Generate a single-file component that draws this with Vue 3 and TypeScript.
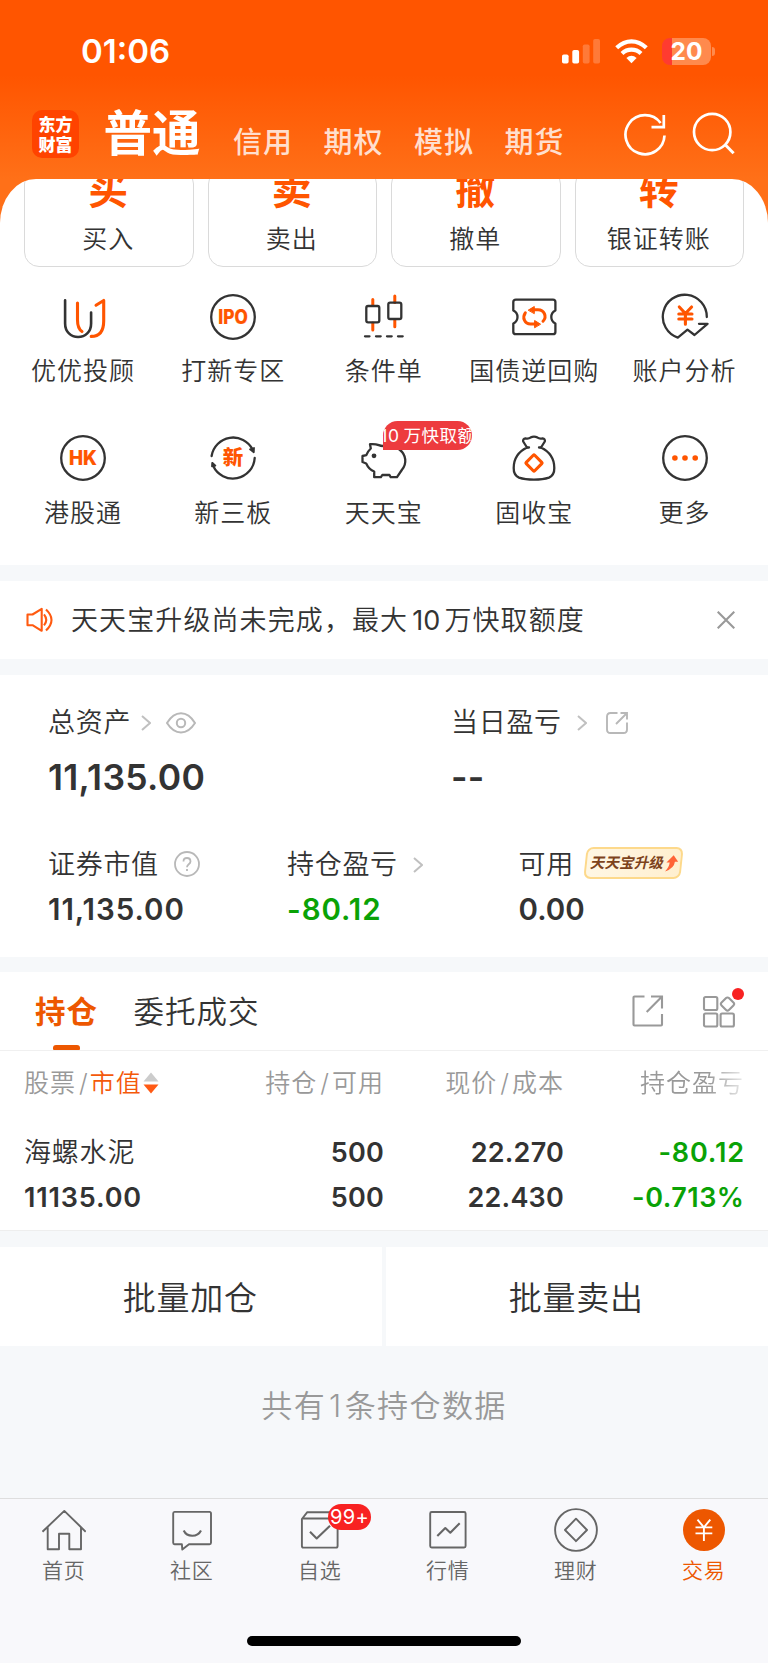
<script setup lang="ts">
type Cell = { icon: string; label: string; badge?: string }

const headerTabs: string[] = ['信用', '期权', '模拟', '期货']

const quickActions: { mark: string; label: string }[] = [
  { mark: '买', label: '买入' },
  { mark: '卖', label: '卖出' },
  { mark: '撤', label: '撤单' },
  { mark: '转', label: '银证转账' },
]

const services: Cell[] = [
  { icon: 'advisor', label: '优优投顾' },
  { icon: 'ipo', label: '打新专区' },
  { icon: 'candle', label: '条件单' },
  { icon: 'repo', label: '国债逆回购' },
  { icon: 'analysis', label: '账户分析' },
  { icon: 'hk', label: '港股通' },
  { icon: 'neeq', label: '新三板' },
  { icon: 'pig', label: '天天宝', badge: '10 万快取额' },
  { icon: 'bag', label: '固收宝' },
  { icon: 'more', label: '更多' },
]

const navItems: Cell[] = [
  { icon: 'home', label: '首页' },
  { icon: 'community', label: '社区' },
  { icon: 'watch', label: '自选', badge: '99+' },
  { icon: 'market', label: '行情' },
  { icon: 'wealth', label: '理财' },
  { icon: 'trade', label: '交易' },
]
</script>

<template>
  <div class="page">
    <header class="header">
      <div class="status">
        <span class="time">01:06</span>
        <div class="status-icons">
          <svg class="signal" viewBox="0 0 38 25">
            <rect x="0" y="15.5" width="6.6" height="9" rx="1.8" fill="#fff" />
            <rect x="10.3" y="11" width="6.8" height="13.5" rx="1.8" fill="#fff" />
            <rect x="20.8" y="5.5" width="6.8" height="19" rx="1.8" fill="#fff" opacity=".22" />
            <rect x="31.2" y="0" width="6.8" height="24.5" rx="1.8" fill="#fff" opacity=".22" />
          </svg>
          <svg class="wifi" viewBox="0 0 33 25" fill="none" stroke="#fff" stroke-width="4.2">
            <path d="M1.7 8.8Q8.5 2.3 16.5 2.3T31.3 8.8" />
            <path d="M7 14.5Q11 10.7 16.5 10.7T26 14.5" />
            <path d="M11.4 18.9Q16.5 14.6 21.6 18.9L16.5 24.2Z" fill="#fff" stroke="none" />
          </svg>
          <div class="battery"><span>20</span></div>
        </div>
      </div>
      <div class="topbar">
        <div class="logo"><span>东方</span><span>财富</span></div>
        <h1>普通</h1>
        <nav class="head-tabs">
          <span v-for="t in headerTabs" :key="t">{{ t }}</span>
        </nav>
        <svg class="refresh" viewBox="0 0 44 44" fill="none" stroke="#fff" stroke-width="2.7">
          <path d="M41.5 23.5A19.5 19.5 0 1 1 37.6 11" />
          <path d="M40.8 3V15.2H28.5" />
        </svg>
        <svg class="search" viewBox="0 0 44 44" fill="none" stroke="#fff" stroke-width="2.7">
          <circle cx="20.2" cy="20" r="18.2" />
          <path d="M33 32.5L41.6 41.2" stroke-width="3" />
        </svg>
      </div>
    </header>

    <section class="panel">
      <div class="actions">
        <div v-for="a in quickActions" :key="a.mark" class="action">
          <b>{{ a.mark }}</b>
          <span>{{ a.label }}</span>
        </div>
      </div>
      <div class="services">
        <div v-for="s in services" :key="s.icon" class="service">
          <div class="service-icon">
            <svg viewBox="0 0 48 48" fill="none" stroke="#333" stroke-width="2.3" stroke-linecap="round" stroke-linejoin="round">
              <template v-if="s.icon === 'advisor'">
                <path d="M6.1 7.2V30.5C6.1 39 12 44 19.1 44S32.1 39 32.1 30.5V19.5" stroke-width="2.6" />
                <path d="M18.5 10V27C18.5 33 20 36.5 23 38.5" stroke="#ff5500" stroke-width="3.1" />
                <path d="M37 12.3L44.7 7.5V28C44.7 38 41 43.4 32.2 43.4" stroke="#ff5500" stroke-width="3.1" />
              </template>
              <template v-else-if="s.icon === 'ipo'">
                <circle cx="24" cy="24" r="21.8" />
                <text x="24" y="31" class="mark" text-anchor="middle" textLength="29.5" lengthAdjust="spacingAndGlyphs">IPO</text>
              </template>
              <template v-else-if="s.icon === 'candle'">
                <path d="M12.8 6.5V12.5M12.8 30V37M34.8 3V9.5M34.8 26.5V33.7" stroke="#ff5500" stroke-width="3" />
                <rect x="6.3" y="13" width="13" height="16.3" rx="1.8" />
                <rect x="28.3" y="9.7" width="13" height="16.3" rx="1.8" />
                <path d="M5 43.3H9.5M16 43.3H20.7M27 43.3H31.7M38 43.3H42.7" />
              </template>
              <template v-else-if="s.icon === 'repo'">
                <path d="M6 6.6H43Q45.4 6.6 45.4 9V17.5Q41.3 19.5 41.3 24T45.4 30.5V39Q45.4 41.2 43 41.2H6Q3.3 41.2 3.3 39V30.5Q7.5 28.5 7.5 24T3.3 17.5V9Q3.3 6.6 6 6.6Z" />
                <path d="M15.3 19.8C12 24.5 14.5 31 20.5 31H26M33 28.2C37.5 23.5 34 16.8 28 16.8H22" stroke="#ff5500" stroke-width="3" />
                <path d="M18.5 17L24.3 13.5V20.3ZM30.3 31L24.6 27.5V34.4Z" fill="#ff5500" stroke="#ff5500" stroke-width="1" />
              </template>
              <template v-else-if="s.icon === 'analysis'">
                <path d="M45.8 24A22 22 0 1 0 16.8 44.6L26.5 36.7L33.5 42L46.5 30.8H38" />
                <path d="M18.3 14L24.4 20.5L30.6 14M17.8 21H31M17.8 26H31M24.4 21V31.2" stroke="#ff5500" stroke-width="3.1" />
              </template>
              <template v-else-if="s.icon === 'hk'">
                <circle cx="24" cy="24" r="21.8" />
                <text x="24" y="31" class="mark" text-anchor="middle" textLength="28" lengthAdjust="spacingAndGlyphs">HK</text>
              </template>
              <template v-else-if="s.icon === 'neeq'">
                <path d="M2.6 22A21.8 21.8 0 0 1 43.6 15.5M45.7 24A21.8 21.8 0 0 1 4.2 32" />
                <path d="M41 15.3L44.8 18.2L45 14ZM3 32.3L3.2 28.8L6.4 31.6Z" fill="#333" stroke-width="1.8" />
                <text x="24" y="31.2" class="mark cjk" text-anchor="middle">新</text>
              </template>
              <template v-else-if="s.icon === 'pig'">
                <path d="M22.5 12C18.5 12 18 9.3 10 10.2L10.8 14.5C8 17 7 19.4 6.3 21.2L2.5 22V28L6.2 29.5C8 33.5 10.8 36.3 14.2 37.5V43.2H20.9L22.3 41H29.5L30.7 43.2H37L41.8 36C47.2 29.5 46.3 21 39.5 15.5C33 10 26 10.5 22.5 12Z" />
                <circle cx="14" cy="21.8" r="2.4" fill="#333" stroke="none" />
              </template>
              <template v-else-if="s.icon === 'bag'">
                <path d="M17 13.5L13.2 7.5Q12.6 4.8 15.5 4.3Q18.5 5 20.5 3.6Q24 1.5 27.5 3.6Q29.5 5 32.5 4.3Q35.4 4.8 34.8 7.5L31 13.5Q44.3 20 44.3 34Q44.5 41 39 43.6Q33 45.6 24 45.6T9 43.6Q3.5 41 3.7 34Q3.7 20 17 13.5Z" />
                <path d="M17 13.5H19M29 13.5H31" />
                <rect x="18" y="23" width="12" height="12" rx="1" transform="rotate(45 24 29)" stroke="#ff5500" stroke-width="3.1" />
              </template>
              <template v-else>
                <circle cx="24" cy="24" r="21.8" />
                <g fill="#ff5500" stroke="none">
                  <circle cx="13.9" cy="24" r="2.8" /><circle cx="24" cy="24" r="2.8" /><circle cx="34.2" cy="24" r="2.8" />
                </g>
              </template>
            </svg>
            <em v-if="s.badge"><i>{{ s.badge }}</i></em>
          </div>
          <span>{{ s.label }}</span>
        </div>
      </div>
    </section>

    <section class="notice">
      <svg class="speaker" viewBox="0 0 28 26" fill="none" stroke="#ff5a10" stroke-width="2.1" stroke-linejoin="round">
        <path d="M1.5 7.5H6.5L15.7 1.8V23.8L6.5 18.2H1.5Z" />
        <path d="M18 7.3Q22.5 12.8 18 18.3M20 2.5Q31 12.8 20 23.5" />
      </svg>
      <p>天天宝升级尚未完成，最大<span class="num">10</span>万快取额度</p>
      <svg class="close" viewBox="0 0 18 18" stroke="#999" stroke-width="2.1"><path d="M.7.7L17.3 17.3M17.3.7L.7 17.3" /></svg>
    </section>

    <section class="assets">
      <div class="asset-row main-row">
        <div class="asset">
          <div class="asset-label">总资产
            <svg class="chev" viewBox="0 0 10 16"><path d="M1 1L9 8L1 15" /></svg>
            <svg class="eye" viewBox="0 0 30 22" fill="none" stroke="#b8b8b8" stroke-width="2"><path d="M1 11Q7 1.3 15 1.3T29 11Q23 20.5 15 20.5T1 11Z" /><circle cx="15" cy="11" r="4.2" /></svg>
          </div>
          <strong class="big">11,135.00</strong>
        </div>
        <div class="asset">
          <div class="asset-label">当日盈亏
            <svg class="chev chev-wide" viewBox="0 0 10 16"><path d="M1 1L9 8L1 15" /></svg>
            <svg class="share" viewBox="0 0 22 22" fill="none" stroke="#b8b8b8" stroke-width="1.9"><path d="M11.5 1H4.5Q1 1 1 4.5V17.5Q1 21 4.5 21H17.5Q21 21 21 17.5V10.5M14.5 1H21V7.5M21 1L10 12" /></svg>
          </div>
          <strong class="big dashes">--</strong>
        </div>
      </div>
      <div class="asset-row sub-row">
        <div class="asset">
          <div class="asset-label">证券市值
            <svg class="help" viewBox="0 0 26 26" fill="none" stroke="#b8b8b8" stroke-width="1.8"><circle cx="13" cy="13" r="12" /><path d="M9.5 10.5Q9.5 7 13 7T16.5 10.5Q16.5 12 14.5 13.5Q13 14.8 13 16.3M13 18V20" /></svg>
          </div>
          <strong class="wide">11,135.00</strong>
        </div>
        <div class="asset">
          <div class="asset-label">持仓盈亏
            <svg class="chev chev-wide" viewBox="0 0 10 16"><path d="M1 1L9 8L1 15" /></svg>
          </div>
          <strong class="wide green">-80.12</strong>
        </div>
        <div class="asset">
          <div class="asset-label">可用
            <span class="upgrade"><b>天天宝升级</b>
              <svg viewBox="0 0 14 18"><path d="M8.5 0L14 7L10.5 7Q10.5 14 1 17.5Q5 13 5 8H1.5Z" fill="#ff6337" /></svg>
            </span>
          </div>
          <strong>0.00</strong>
        </div>
      </div>
    </section>

    <section class="holdings">
      <div class="hold-tabs">
        <span class="tab active">持仓</span>
        <span class="tab">委托成交</span>
        <svg class="export" viewBox="0 0 32 32" fill="none" stroke="#999" stroke-width="2.1"><path d="M12.5 1.5H2.5Q1.5 1.5 1.5 2.5V29.5Q1.5 30.5 2.5 30.5H29Q30 30.5 30 29.5V19M19 1.5H30V13.5M30 1.5L14.7 17" /></svg>
        <div class="layout-icon">
          <svg viewBox="0 0 34 34" fill="none" stroke="#999" stroke-width="2.1"><rect x="2" y="2" width="13.3" height="13" rx="1.5" /><rect x="2" y="18.5" width="13.3" height="13" rx="1.5" /><rect x="18.6" y="18.5" width="13.3" height="13" rx="1.5" /><rect x="20.3" y="3.8" width="10.4" height="10.4" rx="2" transform="rotate(45 25.5 9)" /></svg>
          <i class="dot"></i>
        </div>
      </div>
      <div class="grid-row head">
        <span class="sort">股票<s>/</s><b>市值</b><svg viewBox="0 0 16 22"><path d="M8 .5L15.5 9.5H.5Z" fill="#ccc" /><path d="M8 21.5L15.5 12.5H.5Z" fill="#ff5a14" /></svg></span>
        <span>持仓<s>/</s>可用</span>
        <span>现价<s>/</s>成本</span>
        <span class="fade">持仓盈亏</span>
      </div>
      <div class="grid-row line-one">
        <span class="stock">海螺水泥</span><span>500</span><span>22.270</span><span class="green wide">-80.12</span>
      </div>
      <div class="grid-row line-two">
        <span class="wide">11135.00</span><span>500</span><span>22.430</span><span class="green percent">-0.713%</span>
      </div>
    </section>

    <section class="batch">
      <button>批量加仓</button>
      <button>批量卖出</button>
    </section>

    <p class="summary">共有<span class="num">1</span>条持仓数据</p>

    <footer class="navbar">
      <div class="nav-list">
        <div v-for="n in navItems" :key="n.icon" class="nav" :class="{ current: n.icon === 'trade' }">
          <div class="nav-icon">
            <svg viewBox="0 0 44 44" fill="none" stroke="#666" stroke-width="1.9" stroke-linejoin="round">
              <path v-if="n.icon === 'home'" d="M.5 23.7L22.3 2.9L43.7 23.7M5.7 19.5V41.3H17V25.7H27.3V41.3H39V19.5" />
              <template v-else-if="n.icon === 'community'">
                <path d="M4.5 3.9H39.5Q41 3.9 41 5.5V34.7Q41 36.2 39.5 36.2H19L12.3 41.6L11.9 36.2H4.5Q3.2 36.2 3.2 34.7V5.5Q3.2 3.9 4.5 3.9Z" />
                <path d="M13.7 22.5C17 29.5 27.5 29.5 31 22.5" stroke-width="2.1" />
              </template>
              <template v-else-if="n.icon === 'watch'">
                <path d="M5 10.5H38Q39.6 10.5 39.6 12V38Q39.6 39.6 38 39.6H5.5Q3.9 39.6 3.9 38V11L9.3 4.2H34L39.6 10.5" />
                <path d="M12 23.7L18.7 30.5L32 17.7" stroke-width="2.1" />
              </template>
              <template v-else-if="n.icon === 'market'">
                <rect x="4.2" y="4" width="35.4" height="35.5" rx="1.5" />
                <path d="M11.3 28L19.3 20L24.3 24.7L33.7 15.2" stroke-width="2.1" />
              </template>
              <template v-else-if="n.icon === 'wealth'">
                <circle cx="22" cy="22" r="20.9" />
                <path d="M22 10.7L33 22L22 33.2L11 22Z" />
              </template>
              <template v-else>
                <circle cx="22" cy="22" r="21" fill="#ed5700" stroke="none" />
                <path d="M15.5 11.7L21.9 19.3L28.3 11.7M13.5 19.4H30.3M13.5 25.4H30.3M21.9 19.4V33" stroke="#fff" />
              </template>
            </svg>
            <em v-if="n.badge">{{ n.badge }}</em>
          </div>
          <span>{{ n.label }}</span>
        </div>
      </div>
      <div class="home-bar"></div>
    </footer>
  </div>
</template>

<style>
body {
  margin: 0;
  background: #f7f8fa;
}
</style>

<style scoped>
.page {
  width: 768px;
  height: 1663px;
  overflow: hidden;
  background: #f6f8fa;
  color: #333;
  font-family: Inter, "Noto Sans CJK SC", sans-serif;
  font-weight: 350;
  display: flex;
  flex-direction: column;
}
.page * { box-sizing: border-box; }
svg { display: block; flex: none; }
em, i { font-style: normal; }
s { text-decoration: none; }
p, h1 { margin: 0; }

.header {
  height: 229px;
  flex: none;
  background: linear-gradient(#ff5500 0, #ff5500 75px, #ff7018 179px);
  color: #fff;
}
.status {
  height: 102px;
  padding: 0 53px 0 81px;
  display: flex;
  align-items: center;
  justify-content: space-between;
}
.time { font-size: 33px; font-weight: 600; line-height: 40px; }
.status-icons { display: flex; align-items: center; }
.signal { width: 38px; height: 25px; margin-right: 15px; }
.wifi { width: 33px; height: 25px; margin-right: 14px; }
.battery {
  position: relative;
  width: 49px;
  height: 27px;
  border-radius: 8px;
  background: linear-gradient(90deg, #ff3b30 10px, #ff8a4d 10px);
  font-size: 24.5px;
  font-weight: 700;
  line-height: 27px;
  text-align: center;
  margin-right: 4px;
}
.battery::after {
  content: "";
  position: absolute;
  right: -4px;
  top: 9px;
  width: 3px;
  height: 9px;
  border-radius: 0 3px 3px 0;
  background: #ff8a4d;
}
.topbar {
  height: 77px;
  padding-left: 32px;
  display: flex;
  align-items: flex-start;
}
.logo {
  width: 47px;
  height: 48px;
  margin-top: 8px;
  padding-top: 4px;
  border-radius: 10px;
  background: #ff4300;
  display: flex;
  flex-direction: column;
  align-items: center;
  font: 900 17px/19.5px "Noto Sans CJK SC", sans-serif;
}
h1 { margin: 4px 0 0 24.5px; font-size: 48.5px; font-weight: 700; line-height: 56px; width: 98px; white-space: nowrap; }
.head-tabs { display: flex; gap: 30.5px; margin: 22.5px 0 0 31.5px; }
.head-tabs span { width: 60px; font-size: 29px; letter-spacing: 1px; line-height: 36px; font-weight: 500; color: #ffdfce; }
.refresh { width: 44px; height: 44px; margin: 10px 0 0 58px; }
.search { width: 44px; height: 44px; margin: 10px 0 0 25px; }

.panel {
  height: 386px;
  margin-top: -50px;
  flex: none;
  background: #fff;
  border-radius: 36px 36px 0 0 / 44px 44px 0 0;
  overflow: hidden;
}
.actions { display: flex; gap: 14px; padding: 0 24px; margin-top: -10px; }
.action {
  flex: 1;
  height: 98px;
  border: 1.5px solid #dadada;
  border-radius: 15px;
  display: flex;
  flex-direction: column;
  align-items: center;
}
.action b { font-size: 40px; line-height: 40px; color: #ff5500; margin-right: 1px; }
.action span { font-size: 25px; letter-spacing: 1px; line-height: 30px; margin-top: 14px; margin-right: 1px; }
.services {
  display: grid;
  grid-template-columns: repeat(5, 1fr);
  grid-auto-rows: 141.7px;
  padding: 25.5px 8px 0;
}
.service { display: flex; flex-direction: column; align-items: center; }
.service-icon { position: relative; width: 48px; height: 48px; margin-right: .3px; }
.service-icon svg { width: 48px; height: 48px; }
.service > span { font-size: 25px; letter-spacing: 1px; margin-right: .5px; line-height: 34px; margin-top: 13.5px; white-space: nowrap; }
.mark { font-family: Inter, sans-serif; font-size: 19.5px; font-weight: 800; fill: #ff5500; stroke: #ff5500; stroke-width: .2px; }
.mark.cjk { font-family: "Noto Sans CJK SC", sans-serif; font-size: 20.5px; font-weight: 900; stroke: none; }
.service-icon em {
  position: absolute;
  left: 23.5px;
  top: -13px;
  width: 89px;
  height: 29px;
  border-radius: 15px 15px 15px 0;
  background: #ed3b3e;
  color: #fff;
  overflow: hidden;
  display: flex;
}
.service-icon em i { font-size: 17.5px; font-weight: 400; letter-spacing: .5px; word-spacing: -1.5px; line-height: 29px; white-space: nowrap; flex: none; margin-left: -3px; }

.notice {
  margin-top: 16px;
  height: 78px;
  flex: none;
  background: #fff;
  display: flex;
  align-items: center;
  padding: 0 33px 0 25.5px;
}
.speaker { width: 28px; height: 26px; }
.notice p { flex: 1; margin: 2px 0 0 17.5px; font-size: 27px; letter-spacing: 1.1px; line-height: 36px; }
.notice .num { margin: 0 4px; letter-spacing: .1px; font-weight: 400; }
.close { width: 18px; height: 18px; }

.assets { margin-top: 16px; height: 282px; flex: none; background: #fff; padding-top: 30px; }
.asset-row { display: grid; padding-left: 48px; }
.main-row { grid-template-columns: 403px 1fr; height: 141.5px; }
.sub-row { grid-template-columns: 239px 231.5px 1fr; }
.asset-label { display: flex; align-items: center; height: 36px; font-size: 27px; letter-spacing: .7px; line-height: 36px; white-space: nowrap; }
.chev { width: 10px; height: 16px; margin-left: 9.5px; fill: none; stroke: #c0c0c0; stroke-width: 2; }
.chev-wide { margin-left: 15px; }
.eye { width: 30px; height: 22px; margin-left: 15.5px; }
.share { width: 22px; height: 22px; margin-left: 19.5px; }
.help { width: 26px; height: 26px; margin: -1px 0 0 15px; }
.asset strong { display: block; font-size: 29.5px; font-weight: 600; line-height: 36px; margin-top: 8.5px; }
.asset strong.wide { letter-spacing: .95px; }
.asset strong.big { font-size: 35.5px; line-height: 44px; margin-top: 15px; letter-spacing: .3px; }
.green, .asset strong.green { color: #0aa206; }
.upgrade {
  margin: -4px 0 0 11px;
  width: 97px;
  height: 32px;
  border: 2px solid #fdd98b;
  border-radius: 7px;
  background: linear-gradient(90deg, #fff7e4, #ffefcf);
  transform: skewX(-6deg);
  display: flex;
  align-items: center;
  padding-left: 4px;
}
.upgrade b { font-size: 14.6px; letter-spacing: 0; line-height: 28px; font-weight: 700; color: #7d431c; transform: skewX(-7deg); }
.upgrade svg { width: 13px; height: 17px; margin-left: 1px; }

.holdings { margin-top: 15px; height: 259px; flex: none; background: #fff; border-bottom: 1px solid #eee; }
.hold-tabs { height: 79px; border-bottom: 1px solid #f0f0f0; display: flex; align-items: center; padding: 0 32px 0 35px; }
.tab { position: relative; font-size: 30.5px; letter-spacing: 1px; line-height: 79px; margin-right: 35.5px; }
.tab.active { color: #ed5700; font-weight: 700; }
.tab.active::after {
  content: "";
  position: absolute;
  left: 17.5px;
  bottom: 1px;
  width: 27px;
  height: 5px;
  border-radius: 3px 3px 1px 1px;
  background: #ed5700;
}
.export { width: 32px; height: 32px; margin: 0 38px 0 auto; }
.layout-icon { position: relative; width: 34px; height: 34px; margin-top: 2px; }
.dot { position: absolute; right: -8px; top: -7.5px; width: 12px; height: 12px; border-radius: 50%; background: #f82222; }
.grid-row { display: grid; grid-template-columns: 180px 180px 180px 180px; padding-left: 24px; text-align: right; white-space: nowrap; font-size: 27px; font-weight: 600; letter-spacing: .2px; line-height: 36px; }
.grid-row > span:first-child { text-align: left; }
.grid-row .wide { letter-spacing: .85px; margin-right: -.85px; }
.grid-row .percent { letter-spacing: .5px; margin-right: -.5px; }
.grid-row.head { font-size: 25px; letter-spacing: 1px; font-weight: 350; color: #999; margin-top: 14px; }
.head s { margin: 0 2px 0 3px; }
.head .sort { display: flex; align-items: center; }
.head .sort s { margin: 0 1px 0 3px; }
.head b { font-weight: 350; color: #f4590a; }
.head .sort svg { width: 16px; height: 22px; margin-left: 1px; }
.fade { -webkit-mask-image: linear-gradient(90deg, #000 80%, rgba(0, 0, 0, .2)); mask-image: linear-gradient(90deg, #000 80%, rgba(0, 0, 0, .2)); }
.line-one { margin-top: 34px; }
.line-two { margin-top: 8.5px; }
.grid-row .stock { font-weight: 350; letter-spacing: .8px; }

.batch { margin-top: 16px; height: 99px; flex: none; display: grid; grid-template-columns: 1fr 1fr; gap: 4px; }
.batch button { border: 0; padding: 2px 1.5px 0 0; background: #fff; color: #333; font-family: inherit; font-weight: 350; font-size: 33px; letter-spacing: .8px; line-height: 40px; }
.summary { flex: none; margin-top: 40px; height: 40px; text-align: center; font-size: 31px; letter-spacing: 1.4px; line-height: 40px; color: #999; }
.summary .num { margin: 0 2px 0 3px; }

.navbar { margin-top: auto; height: 165px; flex: none; background: #f8f8fb; border-top: 1px solid #dedede; padding-top: 9px; }
.nav-list { display: grid; grid-template-columns: repeat(6, 1fr); height: 128px; }
.nav { display: flex; flex-direction: column; align-items: center; color: #666; }
.nav-icon { position: relative; width: 44px; height: 44px; }
.nav > span { font-size: 21px; letter-spacing: .8px; margin-right: .4px; line-height: 26px; margin-top: 6px; }
.nav.current { color: #ed5700; }
.nav-icon em {
  position: absolute;
  left: 30px;
  top: -4px;
  width: 43px;
  height: 26px;
  border-radius: 13px;
  background: #f82222;
  color: #fff;
  font-size: 20px;
  font-weight: 400;
  letter-spacing: .3px;
  line-height: 26px;
  text-align: center;
}
.home-bar { width: 274px; height: 10px; border-radius: 5px; background: #000; margin: 0 auto; }
</style>
